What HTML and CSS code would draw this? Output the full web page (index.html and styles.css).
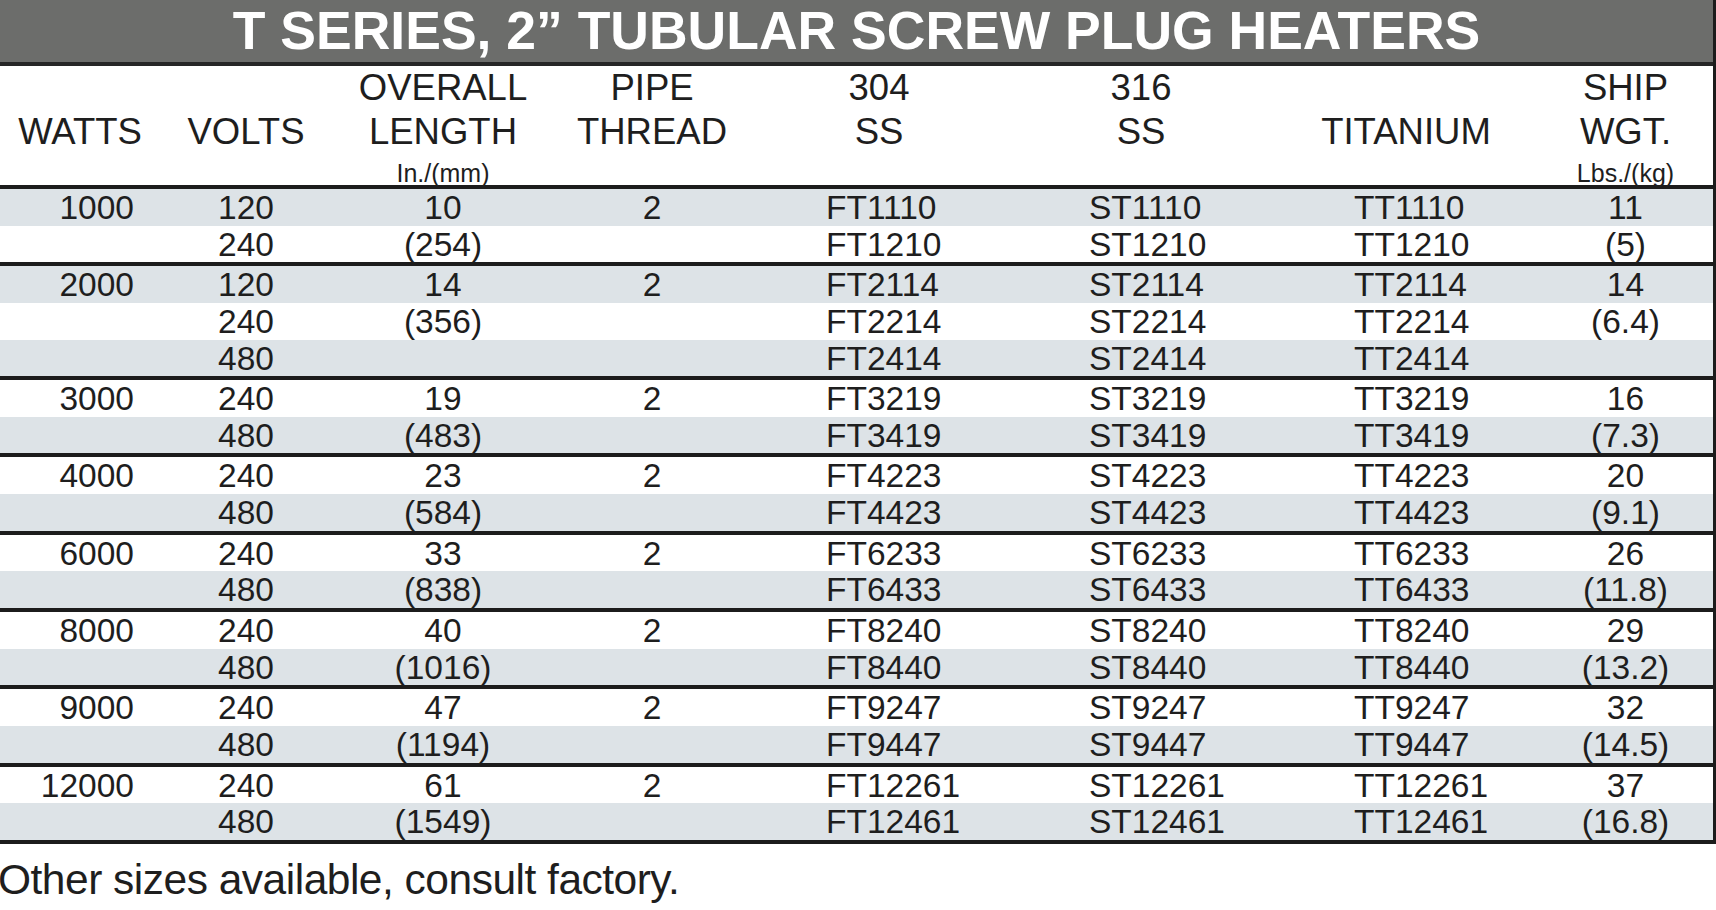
FILE: index.html
```html
<!DOCTYPE html>
<html>
<head>
<meta charset="utf-8">
<link rel="stylesheet" href="styles.css">
</head>
<body>
<div class="sheet">
  <div class="title">T SERIES, 2” TUBULAR SCREW PLUG HEATERS</div>
  <div class="head row-grid">
    <div class="th"><span class="l1"></span><span class="l2">WATTS</span><span class="l3"></span></div>
    <div class="th"><span class="l1"></span><span class="l2">VOLTS</span><span class="l3"></span></div>
    <div class="th"><span class="l1">OVERALL</span><span class="l2">LENGTH</span><span class="l3">In./(mm)</span></div>
    <div class="th"><span class="l1">PIPE</span><span class="l2">THREAD</span><span class="l3"></span></div>
    <div class="th"><span class="l1">304</span><span class="l2">SS</span><span class="l3"></span></div>
    <div class="th"><span class="l1">316</span><span class="l2">SS</span><span class="l3"></span></div>
    <div class="th"><span class="l1"></span><span class="l2">TITANIUM</span><span class="l3"></span></div>
    <div class="th"><span class="l1">SHIP</span><span class="l2">WGT.</span><span class="l3">Lbs./(kg)</span></div>
  </div>

  <div class="group">
    <div class="row row-grid alt"><span class="w">1000</span><span>120</span><span>10</span><span>2</span><span class="pn p1">FT1110</span><span class="pn p2">ST1110</span><span class="pn p3">TT1110</span><span>11</span></div>
    <div class="row row-grid"><span class="w"></span><span>240</span><span>(254)</span><span></span><span class="pn p1">FT1210</span><span class="pn p2">ST1210</span><span class="pn p3">TT1210</span><span>(5)</span></div>
  </div>
  <div class="group">
    <div class="row row-grid alt"><span class="w">2000</span><span>120</span><span>14</span><span>2</span><span class="pn p1">FT2114</span><span class="pn p2">ST2114</span><span class="pn p3">TT2114</span><span>14</span></div>
    <div class="row row-grid"><span class="w"></span><span>240</span><span>(356)</span><span></span><span class="pn p1">FT2214</span><span class="pn p2">ST2214</span><span class="pn p3">TT2214</span><span>(6.4)</span></div>
    <div class="row row-grid alt"><span class="w"></span><span>480</span><span></span><span></span><span class="pn p1">FT2414</span><span class="pn p2">ST2414</span><span class="pn p3">TT2414</span><span></span></div>
  </div>
  <div class="group">
    <div class="row row-grid"><span class="w">3000</span><span>240</span><span>19</span><span>2</span><span class="pn p1">FT3219</span><span class="pn p2">ST3219</span><span class="pn p3">TT3219</span><span>16</span></div>
    <div class="row row-grid alt"><span class="w"></span><span>480</span><span>(483)</span><span></span><span class="pn p1">FT3419</span><span class="pn p2">ST3419</span><span class="pn p3">TT3419</span><span>(7.3)</span></div>
  </div>
  <div class="group">
    <div class="row row-grid"><span class="w">4000</span><span>240</span><span>23</span><span>2</span><span class="pn p1">FT4223</span><span class="pn p2">ST4223</span><span class="pn p3">TT4223</span><span>20</span></div>
    <div class="row row-grid alt"><span class="w"></span><span>480</span><span>(584)</span><span></span><span class="pn p1">FT4423</span><span class="pn p2">ST4423</span><span class="pn p3">TT4423</span><span>(9.1)</span></div>
  </div>
  <div class="group">
    <div class="row row-grid"><span class="w">6000</span><span>240</span><span>33</span><span>2</span><span class="pn p1">FT6233</span><span class="pn p2">ST6233</span><span class="pn p3">TT6233</span><span>26</span></div>
    <div class="row row-grid alt"><span class="w"></span><span>480</span><span>(838)</span><span></span><span class="pn p1">FT6433</span><span class="pn p2">ST6433</span><span class="pn p3">TT6433</span><span>(11.8)</span></div>
  </div>
  <div class="group">
    <div class="row row-grid"><span class="w">8000</span><span>240</span><span>40</span><span>2</span><span class="pn p1">FT8240</span><span class="pn p2">ST8240</span><span class="pn p3">TT8240</span><span>29</span></div>
    <div class="row row-grid alt"><span class="w"></span><span>480</span><span>(1016)</span><span></span><span class="pn p1">FT8440</span><span class="pn p2">ST8440</span><span class="pn p3">TT8440</span><span>(13.2)</span></div>
  </div>
  <div class="group">
    <div class="row row-grid"><span class="w">9000</span><span>240</span><span>47</span><span>2</span><span class="pn p1">FT9247</span><span class="pn p2">ST9247</span><span class="pn p3">TT9247</span><span>32</span></div>
    <div class="row row-grid alt"><span class="w"></span><span>480</span><span>(1194)</span><span></span><span class="pn p1">FT9447</span><span class="pn p2">ST9447</span><span class="pn p3">TT9447</span><span>(14.5)</span></div>
  </div>
  <div class="group">
    <div class="row row-grid"><span class="w">12000</span><span>240</span><span>61</span><span>2</span><span class="pn p1">FT12261</span><span class="pn p2">ST12261</span><span class="pn p3">TT12261</span><span>37</span></div>
    <div class="row row-grid alt"><span class="w"></span><span>480</span><span>(1549)</span><span></span><span class="pn p1">FT12461</span><span class="pn p2">ST12461</span><span class="pn p3">TT12461</span><span>(16.8)</span></div>
  </div>
</div>
<p class="note">Other sizes available, consult factory.</p>
</body>
</html>
```
FILE: styles.css
```css
html, body {
  margin: 0;
  padding: 0;
  background: #ffffff;
}
body {
  font-family: "Liberation Sans", Arial, sans-serif;
  color: #1e1e1e;
  width: 1716px;
  overflow: hidden;
}
.sheet {
  width: 1713px;
  border-right: 3px solid #1c1c1c;
}
.title {
  height: 62px;
  background: #6c6d6b;
  color: #ffffff;
  font-weight: bold;
  font-size: 53.5px;
  line-height: 62px;
  text-align: center;
  border-bottom: 4px solid #262626;
  white-space: nowrap;
}
.row-grid {
  display: grid;
  grid-template-columns: 160px 172px 222px 196px 258px 266px 264px 175px;
}
.head {
  height: 119px;
  border-bottom: 4px solid #1c1c1c;
}
.th {
  display: flex;
  flex-direction: column;
  align-items: center;
  padding-top: 2px;
  font-size: 36.5px;
  white-space: nowrap;
}
.th .l1 {
  height: 40px;
  line-height: 40px;
}
.th .l2 {
  height: 47px;
  line-height: 47px;
}
.th .l3 {
  height: 30px;
  line-height: 36px;
  font-size: 25px;
}
.group {
  border-bottom: 4px solid #1c1c1c;
}
.row {
  height: 36.65px;
  line-height: 37.5px;
  font-size: 33.5px;
  text-align: center;
  white-space: nowrap;
}
.row.alt {
  background: #dde3e7;
}
.row .w {
  text-align: right;
  padding-right: 26px;
}
.row .pn {
  text-align: left;
}
.row .p1 {
  padding-left: 76px;
}
.row .p2 {
  padding-left: 81px;
}
.row .p3 {
  padding-left: 80px;
}
.note {
  margin: 12px 0 0 -2px;
  font-size: 42.5px;
  line-height: 48px;
  letter-spacing: -0.5px;
  color: #1e1e1e;
}
```
